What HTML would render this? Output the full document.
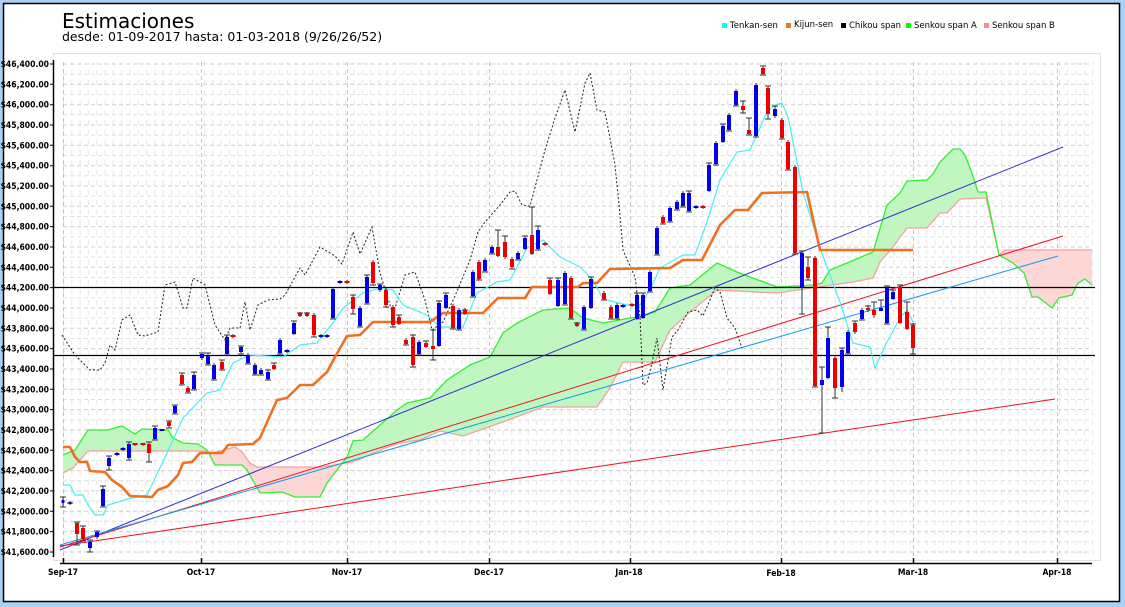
<!DOCTYPE html>
<html><head><meta charset="utf-8"><style>
html,body{margin:0;padding:0;background:#a9d1f3;}
body{width:1125px;height:607px;overflow:hidden;}
svg{display:block;font-family:"Liberation Sans",sans-serif;}
</style></head><body>
<svg width="1125" height="607" viewBox="0 0 1125 607" xmlns="http://www.w3.org/2000/svg">
<rect x="0" y="0" width="1125" height="607" fill="#a9d1f3"/>
<rect x="3.5" y="3.5" width="1116" height="598" fill="#fff" stroke="#000" stroke-width="1.5"/>
<text x="62" y="28" font-size="20" fill="#000" font-family="DejaVu Sans,sans-serif">Estimaciones</text>
<text x="62" y="41" font-size="12.5" fill="#000" font-family="DejaVu Sans,sans-serif">desde: 01-09-2017 hasta: 01-03-2018 (9/26/26/52)</text>
<g font-size="8.5" fill="#000" font-family="DejaVu Sans,sans-serif">
<rect x="722" y="23" width="5" height="5" fill="#00ffff"/><text x="730" y="28">Tenkan-sen</text>
<rect x="786" y="23" width="5" height="5" fill="#f07820"/><text x="794" y="27">Kijun-sen</text>
<rect x="841" y="23" width="5" height="5" fill="#000"/><text x="849" y="28">Chikou span</text>
<rect x="906" y="23" width="5" height="5" fill="#00ff00"/><text x="914" y="28">Senkou span A</text>
<rect x="984" y="23" width="5" height="5" fill="#ff8888"/><text x="992" y="28">Senkou span B</text>
</g>
<rect x="53.5" y="53.5" width="1047" height="507" fill="#fff" stroke="#e2e2e2"/>
<defs>
<pattern id="minv" x="63" y="0" width="8.3" height="607" patternUnits="userSpaceOnUse">
<line x1="0.5" y1="0" x2="0.5" y2="607" stroke="#e6e6e6" stroke-dasharray="5,5"/>
</pattern>
<clipPath id="aboveB"><path d="M63,473 L73,468 L88,451 L205,451 L213,453 L235,447 L242,452 L250,463 L257,467 L322,467 L352,462 L360,459 L385,448 L400,443 L420,440 L440,431 L463,436 L500,423 L543,407 L597,407 L610,388 L623,362 L655,362 L670,330 L690,312 L717,290 L777,293 L853,282 L873,278 L880,262 L893,247 L907,228 L927,228 L940,213 L947,213 L960,199 L986,198 L999,255 L1005,250 L1092,250 L1092,0 L63,0Z"/></clipPath>
<clipPath id="belowB"><path d="M63,473 L73,468 L88,451 L205,451 L213,453 L235,447 L242,452 L250,463 L257,467 L322,467 L352,462 L360,459 L385,448 L400,443 L420,440 L440,431 L463,436 L500,423 L543,407 L597,407 L610,388 L623,362 L655,362 L670,330 L690,312 L717,290 L777,293 L853,282 L873,278 L880,262 L893,247 L907,228 L927,228 L940,213 L947,213 L960,199 L986,198 L999,255 L1005,250 L1092,250 L1092,600 L63,600Z"/></clipPath>
</defs>
<rect x="63" y="62" width="1030" height="492" fill="url(#minv)"/>
<g stroke="#cfcfcf" stroke-dasharray="4,3">
<path d="M63,64H1092M63,84.3H1092M63,104.7H1092M63,125H1092M63,145.3H1092M63,165.7H1092M63,186H1092M63,206.3H1092M63,226.6H1092M63,247H1092M63,267.3H1092M63,287.6H1092M63,308H1092M63,328.3H1092M63,348.6H1092M63,369H1092M63,389.3H1092M63,409.6H1092M63,429.9H1092M63,450.3H1092M63,470.6H1092M63,490.9H1092M63,511.3H1092M63,531.6H1092M63,552H1092"/>
</g>
<g stroke="#e0e0e0" stroke-dasharray="4,3">
<path d="M63,74.2H1092M63,94.5H1092M63,114.8H1092M63,135.2H1092M63,155.5H1092M63,175.8H1092M63,196.2H1092M63,216.5H1092M63,236.8H1092M63,257.1H1092M63,277.5H1092M63,297.8H1092M63,318.1H1092M63,338.5H1092M63,358.8H1092M63,379.1H1092M63,399.5H1092M63,419.8H1092M63,440.1H1092M63,460.4H1092M63,480.8H1092M63,501.1H1092M63,521.4H1092M63,541.8H1092"/>
</g>
<g stroke="#c4c4c4" stroke-dasharray="4,3">
<path d="M63.5,62V556M201.5,62V556M347.5,62V556M489.5,62V556M630.5,62V556M781.5,62V556M913.5,62V556M1057.5,62V556"/>
</g>
<path clip-path="url(#aboveB)" fill="#c0f6c0" d="M63,455 L75,450 L88,430 L108,430 L122,426 L135,434 L142,429 L168,430 L173,438 L183,443 L198,444 L207,450 L215,465 L242,465 L247,470 L260,493 L282,492 L295,497 L320,497 L327,483 L347,457 L353,441 L363,440 L397,410 L407,403 L430,398 L447,380 L470,365 L490,357 L503,333 L517,323 L543,310 L570,308 L583,318 L603,323 L630,318 L640,317 L655,312 L670,288 L690,285 L717,263 L737,272 L777,287 L813,285 L822,283 L830,270 L847,263 L873,252 L887,205 L900,193 L907,181 L927,180 L933,174 L940,162 L953,149 L960,149 L965,155 L972,173 L978,192 L986,192 L999,255 L1013,263 L1024,273 L1032,297 L1038,297 L1052,308 L1059,298 L1072,295 L1078,283 L1085,279 L1092,285 L1092,600 L63,600Z"/>
<path clip-path="url(#belowB)" fill="#fdd6d6" d="M63,455 L75,450 L88,430 L108,430 L122,426 L135,434 L142,429 L168,430 L173,438 L183,443 L198,444 L207,450 L215,465 L242,465 L247,470 L260,493 L282,492 L295,497 L320,497 L327,483 L347,457 L353,441 L363,440 L397,410 L407,403 L430,398 L447,380 L470,365 L490,357 L503,333 L517,323 L543,310 L570,308 L583,318 L603,323 L630,318 L640,317 L655,312 L670,288 L690,285 L717,263 L737,272 L777,287 L813,285 L822,283 L830,270 L847,263 L873,252 L887,205 L900,193 L907,181 L927,180 L933,174 L940,162 L953,149 L960,149 L965,155 L972,173 L978,192 L986,192 L999,255 L1013,263 L1024,273 L1032,297 L1038,297 L1052,308 L1059,298 L1072,295 L1078,283 L1085,279 L1092,285 L1092,0 L63,0Z"/>
<polyline fill="none" stroke="#f7a0a0" stroke-width="1.3" points="63,473 73,468 88,451 205,451 213,453 235,447 242,452 250,463 257,467 322,467 352,462 360,459 385,448 400,443 420,440 440,431 463,436 500,423 543,407 597,407 610,388 623,362 655,362 670,330 690,312 717,290 777,293 853,282 873,278 880,262 893,247 907,228 927,228 940,213 947,213 960,199 986,198 999,255 1005,250 1092,250"/>
<polyline fill="none" stroke="#33ee33" stroke-width="1.3" points="63,455 75,450 88,430 108,430 122,426 135,434 142,429 168,430 173,438 183,443 198,444 207,450 215,465 242,465 247,470 260,493 282,492 295,497 320,497 327,483 347,457 353,441 363,440 397,410 407,403 430,398 447,380 470,365 490,357 503,333 517,323 543,310 570,308 583,318 603,323 630,318 640,317 655,312 670,288 690,285 717,263 737,272 777,287 813,285 822,283 830,270 847,263 873,252 887,205 900,193 907,181 927,180 933,174 940,162 953,149 960,149 965,155 972,173 978,192 986,192 999,255 1013,263 1024,273 1032,297 1038,297 1052,308 1059,298 1072,295 1078,283 1085,279 1092,285"/>
<path d="M53,287.5H1095M53,355.5H1095" stroke="#000" stroke-width="1.2"/>
<line x1="60" y1="550" x2="1063" y2="147" stroke="#3030d0" stroke-width="1"/>
<line x1="60" y1="547" x2="1063" y2="236" stroke="#ee1122" stroke-width="1"/>
<line x1="60" y1="545" x2="1058" y2="256" stroke="#1199ee" stroke-width="1"/>
<line x1="60" y1="546" x2="1055" y2="399" stroke="#ee1122" stroke-width="1"/>
<polyline fill="none" stroke="#222" stroke-width="1" stroke-dasharray="2,2" points="62,335 75,355 90,370 100,370 105,363 110,345 115,350 122,320 130,315 138,335 145,336 158,332 165,285 175,282 183,308 187,308 193,278 205,285 215,325 225,340 230,328 240,328 245,302 250,330 258,305 268,300 280,299 285,295 300,268 305,275 320,247 335,256 342,264 353,232 360,254 372,227 380,273 393,315 405,275 415,272 425,300 432,330 443,322 455,296 470,260 478,232 485,222 500,205 510,192 515,191 522,205 530,206 545,150 555,118 565,90 575,132 585,83 590,73 597,110 605,112 615,165 620,215 623,250 635,277 640,317 643,385 647,383 652,363 657,338 663,390 672,337 678,330 688,312 697,310 703,316 715,288 720,292 727,318 735,328 742,348"/>
<polyline fill="none" stroke="#44f0f4" stroke-width="1.2" points="63,485 70,485 75,495 83,495 88,505 95,515 103,515 108,505 128,499 137,497 147,495 167,453 183,418 207,393 220,390 233,363 250,355 283,357 300,345 317,343 335,320 343,308 363,293 380,288 393,290 403,305 427,315 440,327 463,327 477,293 497,282 510,280 527,248 543,240 560,257 580,267 593,280 603,299 627,305 640,305 650,290 660,268 683,255 695,255 707,222 720,180 737,152 750,150 767,112 775,105 782,103 788,117 803,192 820,248 840,302 853,343 870,347 875,368 887,342 900,318 907,310 913,322"/>
<polyline fill="none" stroke="#f07020" stroke-width="2.6" stroke-linejoin="round" points="63,447 70,447 75,457 80,462 87,462 90,471 105,472 112,480 122,487 130,496 152,497 158,490 168,486 178,475 183,463 192,462 200,453 222,453 228,445 253,444 260,438 277,400 287,398 300,385 313,385 327,372 335,357 347,336 360,335 373,322 430,322 443,313 483,313 498,298 525,298 532,287 578,287 583,283 597,283 610,269 670,268 683,260 702,260 720,225 735,210 748,210 762,193 807,192 820,250 913,250"/>
<path fill="none" stroke="#333" stroke-width="1" d="
M63,497V507M60,497h6M60,507h6 M70,501V505M67,503h6
M77,522V545M74,522h6M74,545h6 M83,526V541M80,526h6M80,541h6 M90,540V552M87,540h6M87,552h6 M97,531V539M94,531h6
M103,486V507M100,486h6M100,507h6 M109,456V470M106,456h6M106,470h6 M117,452V456M114,454h6 M123,447V451M120,449h6
M129,442V460M126,442h6M126,460h6 M135,443V446M132,444h6 M143,443V446M140,444h6 M149,442V462M146,442h6M146,462h6
M155,426V440M152,426h6M152,440h6 M162,429V431M159,430h6 M169,421V428M166,421h6M166,428h6 M175,405V414M172,405h6M172,414h6
M182,373V385M179,373h6M179,385h6 M188,386V393M185,393h6 M194,372V390M191,372h6M191,390h6
M202,353V360M199,353h6 M208,353V365M205,353h6M205,365h6 M214,363V380M211,380h6 M222,360V370M219,360h6M219,370h6
M227,335V355M224,335h6M224,355h6 M233,334V338M230,336h6 M241,346V354M238,346h6M238,354h6 M248,353V364M245,364h6 M255,363V375M252,375h6 M261,368V375M258,375h6 M268,370V380M265,370h6M265,380h6 M274,363V370M271,363h6
M280,338V354M277,354h6 M287,349V353M284,351h6 M294,321V335M291,321h6 M300,312V317M297,313h6 M307,312V317M304,313h6 M314,313V337M311,337h6 M321,334V338M318,336h6 M327,334V338M324,336h6
M333,287V319M330,319h6 M340,280V284M337,282h6 M347,280V284M344,282h6
M353,295V314M350,295h6M350,314h6 M360,306V327M357,327h6 M367,275V304M364,275h6M364,304h6 M373,260V285M370,285h6 M380,284V292M377,284h6 M386,288V307M383,307h6 M393,305V327M390,327h6 M399,315V325M396,315h6 M406,338V345M403,345h6
M413,335V367M410,335h6M410,367h6 M419,340V355M416,355h6 M426,341V348M423,341h6 M433,330V360M430,330h6M430,360h6 M439,301V347M436,301h6 M446,293V309M443,293h6 M453,304V329M450,329h6 M459,308V330M456,330h6 M465,308V315M462,310h6
M473,270V297M470,297h6 M479,260V280M476,280h6 M485,258V272M482,272h6 M492,245V254M489,254h6 M498,230V257M495,230h6 M505,236V259M502,236h6 M512,257V269M509,269h6 M518,251V260M515,260h6 M525,236V250M522,236h6 M532,207V255M529,207h6 M538,226V250M535,226h6M535,250h6 M545,242V246M542,244h6
M550,278V295M547,278h6 M558,278V307M555,278h6 M565,271V305M562,305h6 M571,276V319M568,319h6 M577,322V327M574,323h6 M584,305V330M581,330h6 M591,277V309M588,277h6 M604,291V300M601,300h6 M611,305V319M608,319h6 M617,303V319M614,319h6 M623,304V308M620,306h6 M632,303V307M629,305h6 M637,293V320M634,293h6 M643,293V319M640,293h6 M650,270V292M647,292h6
M657,226V255M654,255h6 M663,215V224M660,224h6 M670,206V222M667,222h6 M677,200V210M674,210h6 M683,191V207M680,207h6 M689,191V212M686,191h6M686,212h6 M696,205V209M693,207h6 M703,205V209M700,207h6
M709,163V192M706,163h6 M716,141V165M713,165h6 M723,124V143M720,124h6 M729,113V131M726,131h6 M736,89V106M733,106h6 M743,101V113M740,101h6M740,113h6 M749,118V135M746,118h6M746,135h6 M756,83V137M753,137h6 M763,66V75M760,66h6M760,75h6 M768,86V119M765,86h6M765,119h6 M775,106V118M772,106h6 M782,118V139M779,139h6 M788,140V170M785,170h6 M795,165V254M792,254h6
M802,251V314M799,251h6M799,314h6 M808,257V280M805,257h6M805,280h6 M815,256V387M812,387h6 M822,367V433M819,367h6M819,433h6 M828,327V379M825,327h6 M835,355V398M832,398h6 M842,348V392M839,348h6 M848,330V354M845,354h6 M855,321V334M852,321h6 M862,308V320M859,320h6 M868,305V312M865,306h6 M874,302V318M871,302h6 M881,300V311M878,300h6 M887,286V324M884,286h6M884,324h6 M893,290V300M890,290h6 M900,285V324M897,285h6 M907,302V330M904,302h6 M913,323V354M910,324h6M910,354h6"/>
<g fill="#0000ee">
<rect x="61.5" y="500" width="3" height="3"/><rect x="68.5" y="502" width="3" height="2"/>
<rect x="88" y="542" width="4" height="6"/><rect x="95" y="532" width="4" height="5"/>
<rect x="101" y="489" width="4" height="17"/><rect x="107" y="458" width="4" height="8"/><rect x="115" y="453" width="4" height="2"/><rect x="121" y="448" width="4" height="2"/>
<rect x="127" y="444" width="4" height="14"/><rect x="153" y="428" width="4" height="11"/><rect x="160" y="429" width="4" height="2"/><rect x="173" y="406" width="4" height="7"/>
<rect x="192" y="375" width="4" height="14"/><rect x="200" y="354" width="4" height="4"/><rect x="206" y="355" width="4" height="9"/><rect x="212" y="365" width="4" height="14"/>
<rect x="225" y="337" width="4" height="17"/><rect x="239" y="347" width="4" height="5"/><rect x="246" y="355" width="4" height="8"/><rect x="253" y="365" width="4" height="9"/><rect x="259" y="370" width="4" height="4"/><rect x="266" y="372" width="4" height="7"/>
<rect x="278" y="340" width="4" height="13"/><rect x="285" y="350" width="4" height="2"/><rect x="292" y="323" width="4" height="11"/><rect x="319" y="335" width="4" height="2"/><rect x="325" y="335" width="4" height="2"/>
<rect x="331" y="289" width="4" height="29"/><rect x="338" y="281" width="4" height="2"/><rect x="358" y="308" width="4" height="18"/><rect x="365" y="277" width="4" height="26"/><rect x="378" y="285" width="4" height="5"/>
<rect x="417" y="342" width="4" height="12"/><rect x="437" y="303" width="4" height="43"/><rect x="444" y="295" width="4" height="13"/><rect x="457" y="310" width="4" height="19"/>
<rect x="471" y="272" width="4" height="24"/><rect x="483" y="260" width="4" height="11"/><rect x="490" y="247" width="4" height="6"/><rect x="516" y="253" width="4" height="6"/><rect x="523" y="238" width="4" height="11"/><rect x="536" y="230" width="4" height="19"/>
<rect x="556" y="280" width="4" height="26"/><rect x="563" y="273" width="4" height="31"/><rect x="582" y="307" width="4" height="22"/><rect x="589" y="279" width="4" height="29"/><rect x="615" y="305" width="4" height="13"/><rect x="621" y="305" width="4" height="2"/><rect x="635" y="295" width="4" height="24"/><rect x="641" y="295" width="4" height="23"/><rect x="648" y="272" width="4" height="19"/>
<rect x="655" y="228" width="4" height="26"/><rect x="668" y="208" width="4" height="13"/><rect x="675" y="202" width="4" height="7"/><rect x="681" y="193" width="4" height="13"/><rect x="687" y="193" width="4" height="18"/><rect x="694" y="206" width="4" height="2"/>
<rect x="707" y="165" width="4" height="26"/><rect x="714" y="143" width="4" height="21"/><rect x="721" y="126" width="4" height="16"/><rect x="727" y="115" width="4" height="15"/><rect x="734" y="91" width="4" height="14"/><rect x="754" y="85" width="4" height="51"/><rect x="773" y="109" width="4" height="7"/>
<rect x="800" y="253" width="4" height="35"/><rect x="820" y="380" width="4" height="5"/><rect x="826" y="338" width="4" height="40"/><rect x="840" y="350" width="4" height="37"/><rect x="846" y="332" width="4" height="21"/><rect x="860" y="310" width="4" height="9"/><rect x="879" y="308" width="4" height="3"/><rect x="885" y="288" width="4" height="35"/><rect x="891" y="292" width="4" height="7"/>
</g>
<g fill="#ee0000">
<rect x="75" y="523" width="4" height="11"/><rect x="81" y="528" width="4" height="11"/>
<rect x="133" y="443" width="4" height="2"/><rect x="141" y="443" width="4" height="2"/><rect x="147" y="444" width="4" height="9"/><rect x="167" y="422" width="4" height="4"/>
<rect x="180" y="375" width="4" height="9"/><rect x="186" y="388" width="4" height="4"/><rect x="220" y="362" width="4" height="7"/><rect x="231" y="335" width="4" height="2"/><rect x="272" y="365" width="4" height="4"/>
<rect x="298" y="313" width="4" height="3"/><rect x="305" y="313" width="4" height="3"/><rect x="312" y="315" width="4" height="20"/><rect x="345" y="281" width="4" height="2"/>
<rect x="351" y="297" width="4" height="12"/><rect x="371" y="262" width="4" height="21"/><rect x="384" y="290" width="4" height="15"/><rect x="391" y="307" width="4" height="18"/><rect x="397" y="317" width="4" height="7"/><rect x="404" y="340" width="4" height="4"/>
<rect x="411" y="337" width="4" height="28"/><rect x="424" y="343" width="4" height="4"/><rect x="431" y="346" width="4" height="3"/><rect x="451" y="306" width="4" height="22"/><rect x="463" y="310" width="4" height="4"/>
<rect x="477" y="262" width="4" height="17"/><rect x="496" y="247" width="4" height="9"/><rect x="503" y="242" width="4" height="15"/><rect x="510" y="259" width="4" height="8"/><rect x="530" y="235" width="4" height="19"/><rect x="543" y="243" width="4" height="2"/>
<rect x="548" y="280" width="4" height="14"/><rect x="569" y="278" width="4" height="40"/><rect x="575" y="323" width="4" height="3"/><rect x="602" y="293" width="4" height="6"/><rect x="609" y="307" width="4" height="11"/><rect x="630" y="304" width="4" height="2"/>
<rect x="661" y="217" width="4" height="6"/><rect x="701" y="206" width="4" height="2"/><rect x="741" y="106" width="4" height="4"/><rect x="747" y="130" width="4" height="4"/>
<rect x="761" y="68" width="4" height="6"/><rect x="766" y="88" width="4" height="26"/><rect x="780" y="120" width="4" height="18"/><rect x="786" y="142" width="4" height="27"/><rect x="793" y="167" width="4" height="86"/>
<rect x="806" y="267" width="4" height="11"/><rect x="813" y="258" width="4" height="128"/><rect x="833" y="358" width="4" height="30"/><rect x="853" y="323" width="4" height="9"/><rect x="866" y="308" width="4" height="2"/><rect x="872" y="310" width="4" height="5"/><rect x="898" y="287" width="4" height="36"/><rect x="905" y="312" width="4" height="17"/><rect x="911" y="325" width="4" height="23"/>
</g>
<line x1="53.5" y1="60" x2="53.5" y2="557" stroke="#000" stroke-width="1.5"/>
<path stroke="#000" d="M50,64H54M50,84.3H54M50,104.7H54M50,125H54M50,145.3H54M50,165.7H54M50,186H54M50,206.3H54M50,226.6H54M50,247H54M50,267.3H54M50,287.6H54M50,308H54M50,328.3H54M50,348.6H54M50,369H54M50,389.3H54M50,409.6H54M50,429.9H54M50,450.3H54M50,470.6H54M50,490.9H54M50,511.3H54M50,531.6H54M50,552H54"/>
<line x1="60" y1="563.5" x2="1092" y2="563.5" stroke="#000" stroke-width="1.5"/>
<path stroke="#000" stroke-width="1.5" d="M63.5,558V564M201.5,558V564M347.5,558V564M489.5,558V564M630.5,558V564M781.5,558V564M913.5,558V564M1057.5,558V564"/>
<g font-size="8.5" font-weight="bold" fill="#000" text-anchor="end" font-family="DejaVu Sans Condensed,DejaVu Sans,sans-serif">
<text x="49" y="67">$46,400.00</text><text x="49" y="87.3">$46,200.00</text><text x="49" y="107.7">$46,000.00</text><text x="49" y="128">$45,800.00</text><text x="49" y="148.3">$45,600.00</text><text x="49" y="168.7">$45,400.00</text><text x="49" y="189">$45,200.00</text><text x="49" y="209.3">$45,000.00</text><text x="49" y="229.6">$44,800.00</text><text x="49" y="250">$44,600.00</text><text x="49" y="270.3">$44,400.00</text><text x="49" y="290.6">$44,200.00</text><text x="49" y="311">$44,000.00</text><text x="49" y="331.3">$43,800.00</text><text x="49" y="351.6">$43,600.00</text><text x="49" y="372">$43,400.00</text><text x="49" y="392.3">$43,200.00</text><text x="49" y="412.6">$43,000.00</text><text x="49" y="432.9">$42,800.00</text><text x="49" y="453.3">$42,600.00</text><text x="49" y="473.6">$42,400.00</text><text x="49" y="493.9">$42,200.00</text><text x="49" y="514.3">$42,000.00</text><text x="49" y="534.6">$41,800.00</text><text x="49" y="555">$41,600.00</text>
</g>
<g font-size="8.5" font-weight="bold" fill="#000" text-anchor="middle" font-family="DejaVu Sans Condensed,DejaVu Sans,sans-serif">
<text x="63" y="575">Sep-17</text><text x="201" y="575">Oct-17</text><text x="347" y="575">Nov-17</text><text x="489" y="575">Dec-17</text><text x="629" y="575">Jan-18</text><text x="781" y="576">Feb-18</text><text x="913" y="575">Mar-18</text><text x="1057" y="575">Apr-18</text>
</g>
</svg>
</body></html>
